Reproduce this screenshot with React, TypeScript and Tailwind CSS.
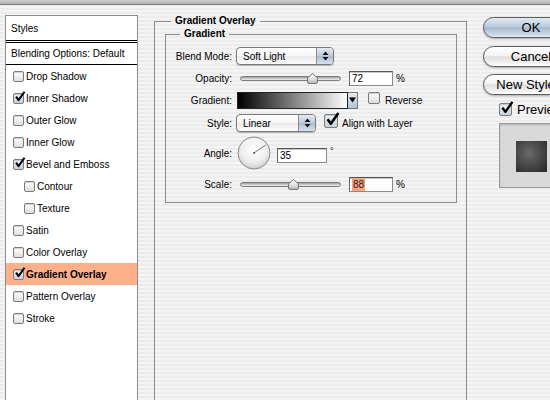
import React from "react";

type CheckProps = { box: string; checked?: boolean };

function Check({ box, checked = false }: CheckProps) {
  return (
    <span className={`relative inline-block shrink-0 ${box}`}>
      <span
        className={`absolute inset-0 rounded-[2px] border border-[#7c7c7c] shadow-[inset_0_1px_1px_rgba(0,0,0,0.18)] ${
          checked
            ? "bg-[linear-gradient(#eef2f7,#c5d0dc)]"
            : "bg-[linear-gradient(#ffffff,#dedede)]"
        }`}
      />
      {checked && (
        <svg
          className="absolute left-[1px] top-[-2px] w-full h-full overflow-visible"
          viewBox="0 0 12 12"
        >
          <path d="M2.2 6.2 L5 10 L11.5 0.8" fill="none" stroke="#000" strokeWidth="2.2" strokeLinejoin="round" />
        </svg>
      )}
    </span>
  );
}

function Popup({ w, label }: { w: string; label: string }) {
  return (
    <div
      className={`${w} h-[18px] shrink-0 flex rounded-[4px] border border-[#7a7a7a] overflow-hidden bg-[linear-gradient(#ffffff,#f6f6f6_50%,#e9e9e9_51%,#fbfbfb)] shadow-[0_1px_1px_rgba(0,0,0,0.25)]`}
    >
      <span className="flex-1 pl-[6px] flex items-center text-[10px]">{label}</span>
      <span className="w-[17px] border-l border-[#8a8a8a] flex items-center justify-center bg-[linear-gradient(#e3eaf2,#bccadb_50%,#a9bbd0_51%,#d8e2ed)]">
        <svg width="7" height="10" viewBox="0 0 7 10">
          <path d="M3.5 0.5 L6.5 4 H0.5 Z M3.5 9.5 L6.5 6 H0.5 Z" fill="#111" />
        </svg>
      </span>
    </div>
  );
}

function Slider({ thumbLeft }: { thumbLeft: string }) {
  return (
    <div className="relative ml-[4px] w-[111px] h-[12px] shrink-0">
      <div className="absolute left-[4px] w-[101px] top-[4px] h-[5px] rounded-full border border-[#7c7c7c] bg-[linear-gradient(#9c9c9c,#d2d2d2_60%,#efefef)]" />
      <svg className={`absolute top-[1px] ${thumbLeft}`} width="11" height="11" viewBox="0 0 11 11">
        <defs>
          <linearGradient id="thumbg" x1="0" y1="0" x2="0" y2="1">
            <stop offset="0" stopColor="#ffffff" />
            <stop offset="0.6" stopColor="#dedede" />
            <stop offset="1" stopColor="#b8b8b8" />
          </linearGradient>
        </defs>
        <path d="M5.5 0.6 L10.4 4.8 V9 Q10.4 10.4 9 10.4 H2 Q0.6 10.4 0.6 9 V4.8 Z" fill="url(#thumbg)" stroke="#666" strokeWidth="0.9" />
      </svg>
    </div>
  );
}

function Field({ w, children }: { w: string; children: React.ReactNode }) {
  return (
    <div
      className={`${w} h-[15px] shrink-0 bg-white border border-[#8a8a8a] border-t-[#555] border-l-[#666] shadow-[inset_0_1px_0_#c8c8c8] text-[10px] leading-[13px] pl-[2px] flex items-center`}
    >
      {children}
    </div>
  );
}

function Button({ children, primary = false, extra = "" }: { children: React.ReactNode; primary?: boolean; extra?: string }) {
  return (
    <div
      className={`${extra} h-[21px] w-[96px] shrink-0 rounded-full border border-[#5c5c5c] flex items-center justify-center text-[13px] leading-none shadow-[0_1px_2px_rgba(0,0,0,0.3)] ${
        primary
          ? "bg-[linear-gradient(#e2eaf3,#bccbdc_45%,#a6b9cf_52%,#c8d6e5_85%,#e6eef6)]"
          : "bg-[linear-gradient(#ffffff,#f3f3f3_45%,#dfdfdf_52%,#f2f2f2_85%,#ffffff)]"
      }`}
    >
      {children}
    </div>
  );
}

const items: { label: string; checked?: boolean; indent?: boolean; active?: boolean }[] = [
  { label: "Drop Shadow" },
  { label: "Inner Shadow", checked: true },
  { label: "Outer Glow" },
  { label: "Inner Glow" },
  { label: "Bevel and Emboss", checked: true },
  { label: "Contour", indent: true },
  { label: "Texture", indent: true },
  { label: "Satin" },
  { label: "Color Overlay" },
  { label: "Gradient Overlay", checked: true, active: true },
  { label: "Pattern Overlay" },
  { label: "Stroke" },
];

export default function App() {
  return (
    <div className="w-[550px] h-[400px] overflow-hidden text-black text-[10px] font-['Liberation_Sans',Arial,Helvetica,sans-serif] bg-[repeating-linear-gradient(180deg,#ececec_0px,#ececec_2px,#f4f4f4_2px,#f4f4f4_4px)]">
      <div className="h-[5px] bg-[linear-gradient(#cdcdcd,#b0b0b0)] border-b border-[#7c7c7c]" />
      <div className="flex items-start pl-[5px]">
        {/* Styles list */}
        <div className="mt-[10px] w-[133px] h-[420px] shrink-0 border border-[#8c8c8c] bg-white">
          <div className="h-[27px] flex items-center pl-[5px] border-b-[3px] border-double border-black">Styles</div>
          <div className="h-[22px] flex items-center pl-[5px] border-b border-black">Blending Options: Default</div>
          {items.map((it) => (
            <div
              key={it.label}
              className={`h-[22px] flex items-center ${it.indent ? "pl-[18px]" : "pl-[7px]"} ${
                it.active ? "bg-[#fdb08a] font-bold" : ""
              }`}
            >
              <Check box="w-[11px] h-[11px]" checked={it.checked} />
              <span className="ml-[2px]">{it.label}</span>
            </div>
          ))}
        </div>

        {/* Gradient Overlay group */}
        <fieldset className="mt-[10px] ml-[16px] w-[313px] h-[420px] shrink-0 border border-[#8e8e8e] min-w-0">
          <legend className="ml-[16px] px-[4px] font-bold text-[10px] leading-[12px]">Gradient Overlay</legend>
          <fieldset className="mt-[1px] ml-[10px] w-[292px] h-[175px] border border-[#8e8e8e] min-w-0">
            <legend className="ml-[14px] px-[4px] font-bold leading-[12px]">Gradient</legend>
            <div className="mt-[5px] flex flex-col">
              <div className="h-[22px] flex items-center">
                <span className="w-[66px] shrink-0 text-right">Blend Mode:</span>
                <span className="ml-[4px]"><Popup w="w-[98px]" label="Soft Light" /></span>
              </div>
              <div className="h-[22px] flex items-center">
                <span className="w-[66px] shrink-0 text-right">Opacity:</span>
                <Slider thumbLeft="left-[71px]" />
                <span className="ml-[2px]"><Field w="w-[44px]">72</Field></span>
                <span className="ml-[3px] self-start mt-[4px]">%</span>
              </div>
              <div className="h-[22px] flex items-center">
                <span className="w-[66px] shrink-0 text-right">Gradient:</span>
                <div className="ml-[5px] w-[111px] h-[17px] shrink-0 border border-[#222] bg-[linear-gradient(to_right,#000000,#ffffff)]" />
                <div className="w-[10px] h-[17px] shrink-0 border border-l-0 border-[#777] bg-[linear-gradient(#e4ebf3,#b3c3d6)] flex items-center justify-center">
                  <svg width="7" height="6" viewBox="0 0 7 6"><path d="M0 0.5 H7 L3.5 5.5 Z" fill="#000" /></svg>
                </div>
                <span className="ml-[10px]"><Check box="w-[12px] h-[12px] block" /></span>
                <span className="ml-[5px]">Reverse</span>
              </div>
              <div className="h-[24px] flex items-center">
                <span className="w-[66px] shrink-0 text-right">Style:</span>
                <span className="ml-[4px]"><Popup w="w-[80px]" label="Linear" /></span>
                <span className="ml-[8px]"><Check box="w-[14px] h-[14px] block" checked /></span>
                <span className="ml-[4px]">Align with Layer</span>
              </div>
              <div className="h-[36px] flex items-center">
                <span className="w-[66px] shrink-0 text-right">Angle:</span>
                <svg className="ml-[5px] shrink-0" width="34" height="34" viewBox="0 0 34 34">
                  <defs>
                    <radialGradient id="dialg" cx="50%" cy="38%" r="62%">
                      <stop offset="0" stopColor="#ffffff" />
                      <stop offset="0.65" stopColor="#eeeeee" />
                      <stop offset="1" stopColor="#cdcdcd" />
                    </radialGradient>
                  </defs>
                  <circle cx="17" cy="17" r="16" fill="url(#dialg)" stroke="#8a8a8a" strokeWidth="1" />
                  <line x1="17" y1="17" x2="28.5" y2="9" stroke="#555" strokeWidth="0.8" />
                  <circle cx="17" cy="17" r="1" fill="#555" />
                </svg>
                <span className="ml-[6px] mt-[4px]"><Field w="w-[50px]">35</Field></span>
                <span className="ml-[3px] self-start mt-[10px] text-[9px]">°</span>
              </div>
              <div className="h-[26px] flex items-center">
                <span className="w-[66px] shrink-0 text-right">Scale:</span>
                <Slider thumbLeft="left-[52px]" />
                <span className="ml-[2px]">
                  <Field w="w-[44px]"><span className="bg-[#f9a27e] px-[1px] text-[#222]">88</span></Field>
                </span>
                <span className="ml-[3px] self-start mt-[6px]">%</span>
              </div>
            </div>
          </fieldset>
        </fieldset>

        {/* Buttons */}
        <div className="ml-[16px] mt-[12px] w-[96px] shrink-0 flex flex-col">
          <Button primary>OK</Button>
          <Button extra="mt-[8px]">Cancel</Button>
          <Button extra="mt-[7px]">New Style...</Button>
          <div className="mt-[8px] ml-[16px] h-[13px] flex items-center whitespace-nowrap">
            <Check box="w-[13px] h-[13px]" checked />
            <span className="ml-[5px] text-[13px] leading-[13px]">Preview</span>
          </div>
          <div className="mt-[7px] ml-[16px] w-[65px] h-[65px] shrink-0 border border-[#9a9a9a] bg-[#d9d9d9] shadow-[inset_0_1px_2px_rgba(0,0,0,0.2)] pt-[17px] pl-[16px]">
            <div className="w-[31px] h-[31px] bg-[radial-gradient(circle_at_42%_40%,#6a6a6a,#444444_55%,#262626)]" />
          </div>
        </div>
      </div>
    </div>
  );
}
